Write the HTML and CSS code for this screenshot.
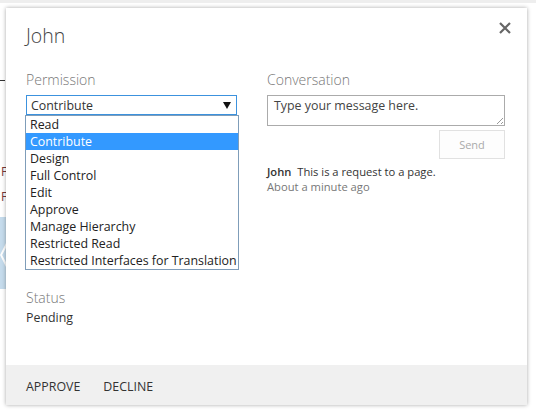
FILE: index.html
```html
<!DOCTYPE html>
<html lang="en">
<head>
  <meta charset="UTF-8" />
  <title>John</title>
  <link rel="stylesheet" href="styles.css">
</head>
<body>

<!-- Страница под диалогом -->
<div class="page">
  <div class="page-top"></div>
  <div class="page-side">
    <span class="side-dash"></span>
    <span class="side-letter first">F</span>
    <span class="side-letter second">F</span>
    <span class="side-tile"></span>
    <span class="side-notch"></span>
  </div>
</div>

<!-- Диалог запроса -->
<div class="dialog">
  <div class="dialog-body">
    <div class="dialog-head">
      <h1>John</h1>
      <svg class="close" width="12" height="12" viewBox="0 0 12 12">
        <path d="M1 1 L11 11 M11 1 L1 11" stroke="#666" stroke-width="2.2" fill="none"/>
      </svg>
    </div>

    <div class="columns">
      <div class="col-left">
        <div class="label">Permission</div>
        <div class="select-wrap">
          <div class="select">
            <span>Contribute</span>
            <svg class="arrow" width="8" height="7" viewBox="0 0 8 7">
              <path d="M0 0 H8 L4 7 Z" fill="#111"/>
            </svg>
          </div>
          <ul class="options">
            <li>Read</li>
            <li class="selected">Contribute</li>
            <li>Design</li>
            <li>Full Control</li>
            <li>Edit</li>
            <li>Approve</li>
            <li>Manage Hierarchy</li>
            <li>Restricted Read</li>
            <li>Restricted Interfaces for Translation</li>
          </ul>
        </div>

        <div class="status">
          <div class="label">Status</div>
          <div class="value">Pending</div>
        </div>
      </div>

      <div class="col-right">
        <div class="label">Conversation</div>
        <div class="message-box">Type your message here.</div>
        <div class="send-row">
          <button class="send">Send</button>
        </div>
        <div class="post">
          <div><strong>John</strong>&nbsp; This is a request to a page.</div>
          <div class="post-time">About a minute ago</div>
        </div>
      </div>
    </div>
  </div>

  <div class="dialog-footer">
    <span>APPROVE</span>
    <span>DECLINE</span>
  </div>
</div>

</body>
</html>
```

FILE: styles.css
```css
* {
  box-sizing: border-box;
  margin: 0;
  padding: 0;
}

body {
  width: 536px;
  height: 412px;
  overflow: hidden;
  background: #fff;
  font-family: 'Open Sans', 'Noto Sans', sans-serif;
  font-size: 12.4px;
  color: #333;
  position: relative;
}

/* Страница позади */
.page {
  height: 100%;
}

.page-top {
  height: 3px;
  background: #eeeeee;
}

.page-side {
  position: absolute;
  left: 0;
  top: 3px;
  width: 6px;
  height: 300px;
}

.side-dash {
  position: absolute;
  top: 77px;
  left: 0;
  width: 5px;
  height: 1px;
  background: #333;
}

.side-letter {
  position: absolute;
  left: 1px;
  font-size: 12px;
  color: #7a3a3a;
}

.side-letter.first { top: 160px; }
.side-letter.second { top: 185px; }

.side-tile {
  position: absolute;
  top: 214px;
  left: 0;
  width: 6px;
  height: 72px;
  background: #c5dbec;
}

.side-notch {
  position: absolute;
  top: 240px;
  left: 0;
  width: 6px;
  height: 24px;
  background: #fff;
  clip-path: polygon(100% 0, 0 50%, 100% 100%, 100% 80%, 35% 50%, 100% 20%);
}

/* Диалог */
.dialog {
  position: absolute;
  left: 6px;
  top: 8px;
  width: 521px;
  height: 397px;
  background: #fff;
  box-shadow: 0 0 4px rgba(0, 0, 0, 0.35);
  display: flex;
  flex-direction: column;
}

.dialog-body {
  flex: 1;
  padding: 14px 22px 0 20px;
}

.dialog-head {
  display: flex;
  justify-content: space-between;
  align-items: flex-start;
  height: 48px;
}

.dialog-head h1 {
  font-size: 19.5px;
  font-weight: 300;
  color: #444;
  line-height: 28px;
}

.close {
  margin-top: 0;
  margin-right: -6px;
}

.columns {
  display: grid;
  grid-template-columns: 241px 1fr;
}

.label {
  font-size: 14px;
  font-weight: 300;
  color: #777;
  line-height: 20px;
  margin-bottom: 5px;
}

.select-wrap {
  position: relative;
  width: 211px;
}

.select {
  height: 20px;
  border: 1px solid #3c92de;
  padding: 0 5px 0 4px;
  display: flex;
  justify-content: space-between;
  align-items: center;
  color: #333;
}

.options {
  position: absolute;
  top: 20px;
  left: -1px;
  width: 214px;
  list-style: none;
  background: #fff;
  border: 1px solid #7f9db9;
  z-index: 5;
}

.options li {
  height: 17px;
  line-height: 17px;
  padding-left: 4px;
  color: #222;
  white-space: nowrap;
}

.options li.selected {
  background: #3399ff;
  color: #fff;
}

.status {
  margin-top: 173px;
}

.status .label {
  margin-bottom: 0;
}

.value {
  line-height: 19px;
}

.message-box {
  position: relative;
  height: 31px;
  border: 1px solid #ababab;
  padding: 1px 6px;
  color: #444;
}

.message-box::after {
  content: '';
  position: absolute;
  right: 1px;
  bottom: 1px;
  width: 6px;
  height: 6px;
  background: linear-gradient(135deg, transparent 45%, #999 45%, #999 55%, transparent 55%, transparent 75%, #999 75%, #999 85%, transparent 85%);
}

.send-row {
  display: flex;
  justify-content: flex-end;
  margin-top: 4px;
}

.send {
  width: 66px;
  height: 29px;
  border: 1px solid #e1e1e1;
  background: #fdfdfd;
  font-family: inherit;
  font-size: 11px;
  color: #aaa;
}

.post {
  margin-top: 5px;
  font-size: 11.2px;
  line-height: 15px;
  color: #333;
}

.post strong {
  font-weight: 600;
}

.post-time {
  color: #777;
}

.dialog-footer {
  height: 40px;
  background: #f0f0f0;
  display: flex;
  align-items: center;
  gap: 23px;
  padding: 2px 0 0 20px;
  color: #333;
}
```
